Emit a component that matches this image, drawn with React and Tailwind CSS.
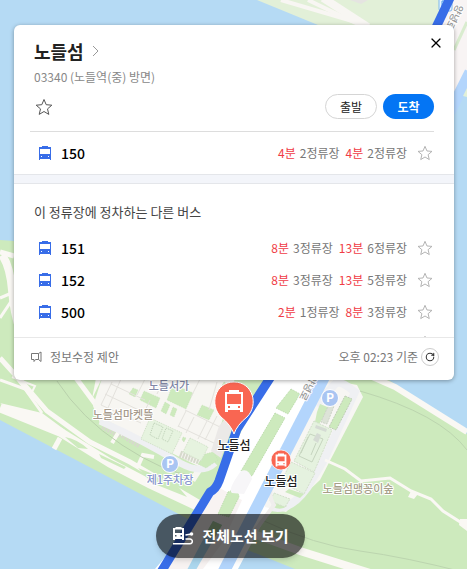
import React, { useState } from 'react';
import { X, RotateCw } from 'lucide-react';

const otherBuses = [
  { id: '151', arrivals: [['8분', '3정류장'], ['13분', '6정류장']] },
  { id: '152', arrivals: [['8분', '3정류장'], ['13분', '5정류장']] },
  { id: '500', arrivals: [['2분', '1정류장'], ['8분', '3정류장']] },
];

const StarIcon = ({ className }) => (
  <svg viewBox="0 0 18 18" fill="none" stroke="currentColor" className={className}>
    <path d="M9 1.5l2.200 5.200 5.600.5-4.300 3.700 1.300 5.500L9 13.500l-4.800 2.900 1.300-5.500L1.200 7.200l5.600-.5z" strokeWidth="1" />
  </svg>
);

const BusIcon = ({ className }) => (
  <svg viewBox="0 0 12 14" className={className}>
    <path
      fill="currentColor"
      fillRule="evenodd"
      d="M3 0h6v1h3v13h-1v-1H1v1H0V1h3zM1 3v5h10V3zM2 10v1h1v-1zm7 0v1h1v-1z"
    />
  </svg>
);

const RouteIcon = ({ className }) => (
  <svg viewBox="0 0 22 20" className={className}>
    <path
      fill="currentColor"
      fillRule="evenodd"
      d="M3.500 1h6v1h2.500v12h-2v-1H3v1H1V2h2.500zM3 3.500V7h7V3.500zM3 9v1.500h1.500V9zm5.500 0v1.500H10V9z"
    />
    <path d="M13.500 9l6-1" stroke="currentColor" strokeWidth="1.300" />
    <circle cx="19.500" cy="8" r="1.800" fill="currentColor" />
    <path d="M13.500 13h4.500a2.300 2.300 0 0 1 0 4.700H1" stroke="currentColor" strokeWidth="1.500" fill="none" />
  </svg>
);

const Parking = ({ x, y }) => (
  <g>
    <circle cx={x} cy={y} r="8.500" fill="#a9c5f2" stroke="#fff" strokeWidth="1" />
    <text x={x} y={y + 4} textAnchor="middle" fontSize="12" fontWeight="700" fill="#fff">P</text>
  </g>
);

const MapView = () => (
  <svg
    viewBox="0 0 467 569"
    preserveAspectRatio="xMidYMin slice"
    className="absolute inset-0 w-full h-full font-['Noto_Sans_CJK_KR',sans-serif]"
  >
    <rect width="467" height="569" fill="#b5daf4" />

    {/* north bank */}
    <path d="M257 0L318 25L380 70H467V0z" fill="#e2f0d8" />
    <g fill="none" stroke="#f8f6f3">
      <path d="M281 0L366 25" strokeWidth="4" />
      <path d="M308 0L362 26" strokeWidth="4" />
      <path d="M323 -2L368 27" strokeWidth="8" />
    </g>
    <path d="M350 0h18l-7 4z" fill="#e5e4e1" />

    {/* island */}
    <path d="M0 240L14 241L454 378L467 391V569H290L235 545L190 520L0 420z" fill="#cdeabd" />
    <path d="M380 378H386L467 434V378z" fill="#b5daf4" />
    <path d="M235 545L295 569H230z" fill="#b5daf4" />
    <g fill="none" stroke="#faf8f4">
      <path d="M0 252L14 256" strokeWidth="5" />
      <path d="M2 255Q10 266 12 290T20 330" strokeWidth="8" />
      <path d="M0 298L14 292M0 318L12 300" strokeWidth="3" />
      <path d="M0 380L25 389L42 413" strokeWidth="3" />
      <path d="M12 377L35 386L30 396L16 378" strokeWidth="2" />
      <path d="M0 358Q24 384 47 411L90 442L130 462L200 503" strokeWidth="5" />
      <path d="M0 408L60 432L110 463L150 484L197 506" strokeWidth="9" />
      <path d="M76 378L96 405L101 419" strokeWidth="5" />
      <path d="M54 449L60 438" strokeWidth="5" />
    </g>
    <path d="M0 403L42 413L65 430L48 431z" fill="#faf8f4" />
    <path d="M96 378L102 378L92 399z" fill="#faf8f4" />
    <path d="M102 378H235L212 455L195 482L100 423L93 406z" fill="#f7f6f2" />
    <path d="M106 420L125 430L115 444L100 429zM125 430L198 466L188 481L116 446z" fill="#cdeabd" />
    <path d="M65 437Q77 439 88 449L78 448zM99 454L126 467L124 469L101 458zM138 468L175 483L187 497L152 483z" fill="#cdeabd" />
    <g fill="none" stroke="#d6d9cc" strokeWidth="7" strokeDasharray="2 1">
      <path d="M103 426L120 435M120 433L140 445M180 454L202 462" />
    </g>
    <path d="M100 421Q145 441 180 463Q202 475 215 463" stroke="#eff0f3" strokeWidth="7" fill="none" />
    <path d="M138 466L143 455L154 457M112 443L118 433" stroke="#faf8f4" strokeWidth="4" fill="none" />

    {/* buildings and lawns on the west side */}
    <g fill="#cdeabd" stroke="#bfddb1" strokeWidth=".5" strokeDasharray="1 1">
      <path d="M133 388l5 2-3 7-6-3zM144 391l16 7-4 10-16-8zM165 402l5 3-4 9-5-3zM173 407l4 2-3 8-4-2zM173 384l20 9-7 16-19-9zM202 405l12 5-5 10-12-5zM224 382l9 4-5 7-8-4z" />
      <path d="M183 437l3 1-2 4-2-2zM205 454l8-2 5 8-12 8-8-4z" />
    </g>
    <g fill="#e6f3df" stroke="#cfe0c6" strokeDasharray="1 1">
      <path d="M150 418l32 15-10 21-31-15zM190 438l18 9-7 14-18-9z" />
      <path d="M154 423l9 4-5 12-8-4zM166 428l7 3-5 11-6-3z" fill="none" stroke="#bdd0b6" />
    </g>
    <g fill="none" stroke="#e4e2dd">
      <path d="M112 382l-11 23 40 18M121 379l-14 31M105 394l38 18M111 384l34 16M145 379l-8 16M164 379l-7 15M150 400l-7 15M186 411l-8 16M185 410l35 17M178 426l38 18M194 417l-8 16M207 421l-9 18M217 416l-12 24M217 382l-8 28M200 379l-9 18" />
    </g>
    <path d="M219 426l7-8 7 8-12 32-10-7z" fill="#ebe9e7" />
    <path d="M57 381Q81 418 122 445T193 476" stroke="#b9d1ac" fill="none" />

    {/* bridge deck */}
    <path d="M276 375L244 426L215 485L184 535L155 569H238L316 422L340 375z" fill="#fff" />
    <path d="M213 484L232 495L242 500L223 542L203 569H160z" fill="#f8f3f2" />
    <path d="M291 389l9 5-12 20-12-6zM275 413l10 5-33 58-11-5zM228 492q10-5 11 5l-10 20-11-3z" fill="#cdeabd" stroke="#badaaa" strokeDasharray="1 1" />
    <path d="M241 471q8-3 11 8l-8 15-12-1q-5-3 9-22z" fill="#f7f6f8" />
    <path d="M213 521l9 4-29 50-6-5z" fill="#acd7ee" />
    <path d="M213 521l9 4-8 14-9-4z" fill="#abcc9e" />

    {/* east side */}
    <path d="M326 379L357 385L363 397L320 480L286 512L265 507L265 492L280 460z" fill="#f7f6f3" />
    <path d="M316 405L336 383Q340 380 355 392L324 460L307 488Q290 512 271 507" fill="none" stroke="#eff0f3" strokeWidth="8" />
    <path d="M320 404l10 4-11 16-4-2 2-10zM289 489l15 5-4 4-15-6zM272 500l15 6q-6 5-14 1z" fill="#cdeabd" />
    <path d="M345 396l7 3-16 31-7-3z" fill="#cdeabd" stroke="#bfceb5" strokeDasharray="2 1" />
    <path d="M329 404l5 2-7 18-6-2z" fill="#dde3d8" stroke="#ccd3c6" strokeDasharray="2 1" />
    <path d="M314 421l18 9-18 42-20-11zM291 462l24 11-11 21-23-12zM274 493l16 6-5 8-15-6z" fill="#e5f2df" stroke="#d3e0cb" strokeDasharray="2 1" />
    <path d="M310 434l13 5-11 23-13-6zM308 437l-7 16M316 443l-5 12" fill="none" stroke="#c6d5bf" />
    <path d="M321 435l-3 8-5-3 4-7zM316 425l11 4-1 3-11-4z" fill="#d5dbd4" />
    <path d="M325 460L345 469L361 481L390 478L411 491L431 499L443 511L465 525" stroke="#faf8f4" strokeWidth="3" fill="none" />
    <path d="M411 491l7 3-4 5-6-2zM460 519h7v12l-8-6z" fill="#faf8f4" />
    <path d="M370 376L395 387L467 432" stroke="#faf8f4" strokeWidth="6" fill="none" />
    <path d="M360 391Q440 414 467 450M264 521Q315 545 360 551T467 573" stroke="#bcd5af" fill="none" />
    <path d="M240 529L300 551L370 573" stroke="#faf8f4" strokeWidth="8" fill="none" />
    <path d="M252 535L274 505Q268 497 272 483" stroke="#f0eeed" strokeWidth="4" fill="none" />

    {/* bridges and route */}
    <path d="M325 375L222 575" stroke="#b3d5fc" strokeWidth="12" fill="none" />
    <path d="M452 0H467V80L454 100V50L435 25z" fill="#f8f4f4" />
    <path d="M467 22L454 50" stroke="#d9eccf" strokeWidth="3" />
    <path d="M470 72L450 112" stroke="#b3d5fc" strokeWidth="11" />
    <path d="M467 88l-4 8 4 1z" fill="#e2f0d8" />
    <rect x="439" y="-4" width="13" height="15" rx="2" fill="#e7f4ff" stroke="#7fb8ef" />
    <path d="M442 1h6v7h-6zM442 4h6" fill="none" stroke="#4d9be8" />
    <path d="M450 -2L431 38" stroke="#386de8" strokeWidth="9" />
    <path d="M272 375L237 429L219 481Q216 489 210 492L158 577" stroke="#386de8" strokeWidth="9" fill="none" strokeLinejoin="round" />

    <g fontSize="11" textAnchor="middle" stroke="#fff" strokeWidth="2" paintOrder="stroke" strokeLinejoin="round" fontWeight="500">
      <text x="169" y="390" fill="#8288a8">노들서가</text>
      <text x="123" y="419" fill="#a69a8c">노들섬마켓뜰</text>
      <text x="170" y="484" fill="#8796cc">제1주차장</text>
      <text x="358" y="493" fill="#a69f89">노들섬맹꽁이숲</text>
      <text x="451" y="16" fontSize="10" fill="#999" transform="rotate(117 451 16)">양녕로</text>
      <text x="305" y="386" fontSize="10" fill="#999" transform="rotate(117 305 386)">양녕로</text>
    </g>
    <Parking x={170} y={464} />
    <Parking x={330} y={398} />

    <path d="M234 434q-3-9-13-17c-12-12-6-35 13-35s25 23 13 35q-10 8-13 17z" fill="#f96652" stroke="#fff" strokeWidth="1" />
    <svg x="224" y="390" width="20" height="22" viewBox="0 0 20 22">
      <path fill="#fff" fillRule="evenodd" d="M5 0h10v2h4v20h-3v-2H4v2H1V2h4zM3 4v10h14V4zM4 16v2h2v-2zm10 0v2h2v-2z" />
    </svg>
    <circle cx="281" cy="460" r="10" fill="#f96652" stroke="#fff" strokeOpacity=".7" />
    <svg x="275" y="453" width="12" height="14" viewBox="0 0 20 22">
      <path fill="#fff" fillRule="evenodd" d="M5 0h10v2h4v20h-3v-2H4v2H1V2h4zM4 5v8h12V5zM4 16v2h2v-2zm10 0v2h2v-2z" />
    </svg>
    <g fontSize="12" textAnchor="middle" fill="#222" stroke="#fff" strokeWidth="2" paintOrder="stroke" fontWeight="500">
      <text x="234" y="450">노들섬</text>
      <text x="281" y="486">노들섬</text>
    </g>
  </svg>
);

const BusRow = ({ bus }) => (
  <li className="flex items-center h-8 pl-[25px] pr-[21px]">
    <BusIcon className="w-3 h-3.5 text-[#386de8]" />
    <span className="ml-2.5 text-sm font-medium text-black">{bus.id}</span>
    <div className="ml-auto flex gap-1.5 text-xs text-[#777]">
      {bus.arrivals.map(([time, stops]) => (
        <span key={time + stops} className="flex gap-1">
          <span className="text-[#f03c46]">{time}</span>
          <span>{stops}</span>
        </span>
      ))}
    </div>
    <button className="ml-2.5 text-[#aaa]" aria-label={bus.id}>
      <StarIcon className="w-4 h-4" />
    </button>
  </li>
);

export default function App() {
  const [open, setOpen] = useState(true);

  return (
    <div className="relative min-h-screen overflow-hidden flex flex-col pl-3.5 pr-[13px] pt-[25px] pb-[11px] font-['Noto_Sans_CJK_KR',sans-serif]">
      <MapView />

      {open && (
        <section className="relative bg-white rounded-md shadow-[0_1px_4px_rgba(0,0,0,0.35)]">
          <header className="relative px-5 pt-3">
            <h1 className="flex items-center h-7 mb-0.5 text-lg font-bold text-[#222]">
              <a href="#stop" className="flex items-center gap-2">
                노들섬
                <svg viewBox="0 0 7 12" className="w-[7px] h-3 text-[#999]" fill="none" stroke="currentColor">
                  <path d="M1 1l5 5-5 5" />
                </svg>
              </a>
            </h1>
            <p className="text-xs leading-5 text-[#888]">03340 (노들역(중) 방면)</p>
            <button
              onClick={() => setOpen(false)}
              className="absolute top-2.5 right-2.5 text-black"
              aria-label="X"
            >
              <X size={16} strokeWidth={1.8} />
            </button>
          </header>

          <div className="flex items-center gap-1.5 h-[45px] pb-[5px] ml-4 mr-5 pl-[5px] border-b border-[#ddd]">
            <button className="mr-auto text-[#555]" aria-label="star">
              <StarIcon className="w-[18px] h-[18px]" />
            </button>
            <button className="w-[52px] h-[25px] rounded-full border border-[#d5d5d5] text-xs text-[#222]">출발</button>
            <button className="w-[51px] h-[25px] rounded-full bg-[#0475f4] text-xs font-bold text-white">도착</button>
          </div>

          <ul className="py-[5px]">
            <BusRow bus={{ id: '150', arrivals: [['4분', '2정류장'], ['4분', '2정류장']] }} />
          </ul>
          <div className="h-2.5 bg-[#f3f5fa] border-y border-[#e4e6ea]" />

          <h2 className="px-5 pt-[18px] pb-2.5 text-[13px] leading-5 text-[#444]">이 정류장에 정차하는 다른 버스</h2>
          <ul>
            {otherBuses.map((bus) => (
              <BusRow key={bus.id} bus={bus} />
            ))}
            <li className="flex justify-end h-[9px] pt-[7px] pr-[21px] overflow-hidden text-[#aaa]">
              <StarIcon className="w-4 h-4 shrink-0" />
            </li>
          </ul>

          <footer className="flex items-center justify-between h-[43px] pb-1 pl-4 pr-[15px] border-t border-[#e8e8e8] text-xs text-[#777]">
            <button className="flex items-center gap-2">
              <svg viewBox="0 0 12 12" className="w-3 h-3" fill="none" stroke="currentColor">
                <path d="M1.500 2.500h7v6H5.500l-1.500 2v-2H1.500zM8.500 2.500L11 1v9.500L8.500 8.500" />
              </svg>
              정보수정 제안
            </button>
            <div className="flex items-center gap-[3px]">
              오후 02:23 기준
              <button
                className="grid place-items-center w-[18px] h-[18px] rounded-full border border-[#ccc] text-[#333]"
                aria-label="02:23"
              >
                <RotateCw size={10} strokeWidth={2.5} />
              </button>
            </div>
          </footer>
        </section>
      )}

      <div className="relative flex justify-center mt-auto pr-[7px]">
        <button className="flex items-center gap-2 h-11 px-4 rounded-full bg-black/60 shadow-md text-[15px] font-bold text-white">
          <RouteIcon className="w-[22px] h-5" />
          전체노선 보기
        </button>
      </div>
    </div>
  );
}
